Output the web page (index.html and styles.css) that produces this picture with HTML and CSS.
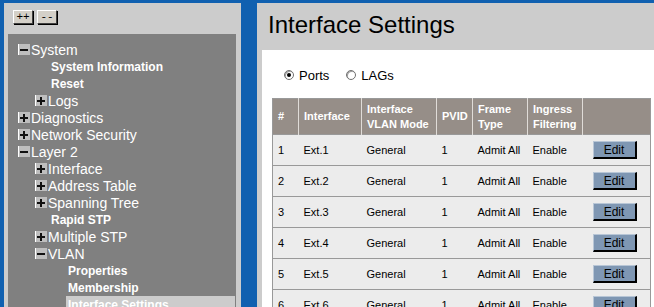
FILE: index.html
```html
<!DOCTYPE html>
<html lang="en">
<head>
    <meta charset="UTF-8">
    <title>Interface Settings</title>
    <link rel="stylesheet" href="styles.css">
</head>
<body>
    <div class="frame">
        <div class="side">
            <div class="side-tools">
                <button class="tool-btn">++</button>
                <button class="tool-btn">--</button>
            </div>
            <div class="tree">
                <div class="node l1"><span class="tog minus"></span>System</div>
                <div class="leaf l2">System Information</div>
                <div class="leaf l2">Reset</div>
                <div class="node l2"><span class="tog plus"></span>Logs</div>
                <div class="node l1"><span class="tog plus"></span>Diagnostics</div>
                <div class="node l1"><span class="tog plus"></span>Network Security</div>
                <div class="node l1"><span class="tog minus"></span>Layer 2</div>
                <div class="node l2"><span class="tog plus"></span>Interface</div>
                <div class="node l2"><span class="tog plus"></span>Address Table</div>
                <div class="node l2"><span class="tog plus"></span>Spanning Tree</div>
                <div class="leaf l2">Rapid STP</div>
                <div class="node l2"><span class="tog plus"></span>Multiple STP</div>
                <div class="node l2"><span class="tog minus"></span>VLAN</div>
                <div class="leaf l3">Properties</div>
                <div class="leaf l3">Membership</div>
                <div class="leaf l3 active">Interface Settings</div>
            </div>
        </div>
        <div class="main">
            <h1 class="page-title">Interface Settings</h1>
            <div class="content">
                <div class="radios">
                    <label class="radio-opt"><span class="radio on"></span>Ports</label>
                    <label class="radio-opt"><span class="radio"></span>LAGs</label>
                </div>
                <table class="grid">
                    <thead>
                        <tr>
                            <th class="c-num">#</th>
                            <th class="c-if">Interface</th>
                            <th class="c-mode">Interface<br>VLAN Mode</th>
                            <th class="c-pvid">PVID</th>
                            <th class="c-frame">Frame<br>Type</th>
                            <th class="c-ingress">Ingress<br>Filtering</th>
                            <th class="c-edit"></th>
                        </tr>
                    </thead>
                    <tbody>
                        <tr><td>1</td><td>Ext.1</td><td>General</td><td>1</td><td>Admit All</td><td>Enable</td><td class="c-edit"><button class="edit-btn">Edit</button></td></tr>
                        <tr><td>2</td><td>Ext.2</td><td>General</td><td>1</td><td>Admit All</td><td>Enable</td><td class="c-edit"><button class="edit-btn">Edit</button></td></tr>
                        <tr><td>3</td><td>Ext.3</td><td>General</td><td>1</td><td>Admit All</td><td>Enable</td><td class="c-edit"><button class="edit-btn">Edit</button></td></tr>
                        <tr><td>4</td><td>Ext.4</td><td>General</td><td>1</td><td>Admit All</td><td>Enable</td><td class="c-edit"><button class="edit-btn">Edit</button></td></tr>
                        <tr><td>5</td><td>Ext.5</td><td>General</td><td>1</td><td>Admit All</td><td>Enable</td><td class="c-edit"><button class="edit-btn">Edit</button></td></tr>
                        <tr><td>6</td><td>Ext.6</td><td>General</td><td>1</td><td>Admit All</td><td>Enable</td><td class="c-edit"><button class="edit-btn">Edit</button></td></tr>
                    </tbody>
                </table>
            </div>
        </div>
    </div>
</body>
</html>
```

FILE: styles.css
```css
html, body {
    margin: 0;
    padding: 0;
    height: 307px;
    overflow: hidden;
}
body {
    background-color: #1060b0;
    font-family: "Liberation Sans", Arial, sans-serif;
}
.frame {
    display: flex;
    gap: 16px;
    padding: 3px 0 0 4px;
    height: 304px;
}
.side {
    width: 237px;
    flex: none;
    background-color: #cccccc;
    display: flex;
    flex-direction: column;
}
.side-tools {
    flex: none;
    display: flex;
    gap: 4px;
    padding: 7px 0 0 9px;
    height: 24px;
}
.tool-btn {
    width: 20px;
    height: 14px;
    padding: 0;
    margin: 0;
    font-family: "Liberation Mono", monospace;
    font-size: 11px;
    line-height: 10px;
    color: #000;
    background-color: #d4d0c8;
    border: 1px solid;
    border-color: #ffffff #404040 #404040 #ffffff;
    box-shadow: 1px 1px 0 #000;
}
.tree {
    flex: 1;
    min-height: 0;
    overflow: hidden;
    margin: 0 5px 0 4px;
    background-color: #808080;
    padding-top: 7px;
    color: #fff;
}
.node, .leaf {
    height: 17px;
    display: flex;
    align-items: center;
    white-space: nowrap;
}
.node {
    font-size: 14px;
}
.leaf {
    font-size: 12px;
    font-weight: bold;
}
.node.l1 { padding-left: 10px; }
.node.l2 { padding-left: 27px; }
.leaf.l2 { padding-left: 43px; }
.leaf.l3 { padding-left: 60px; }
.leaf.active {
    margin-left: 58px;
    margin-right: 1px;
    padding-left: 2px;
    background-color: #cccccc;
}
.tog {
    position: relative;
    width: 11px;
    height: 11px;
    margin-right: 1px;
    background-color: #bebebe;
    border-left: 1px solid #fff;
    flex: none;
}
.tog::before, .tog.plus::after {
    content: "";
    position: absolute;
    background-color: #111;
}
.tog::before {
    left: 1px;
    top: 5px;
    width: 8px;
    height: 2px;
}
.tog.plus::after {
    left: 4px;
    top: 2px;
    width: 2px;
    height: 8px;
}
.main {
    flex: 1;
    min-width: 0;
    background-color: #cccccc;
    display: flex;
    flex-direction: column;
}
.page-title {
    flex: none;
    margin: 0;
    padding: 8px 0 0 11px;
    height: 39px;
    font-size: 24px;
    line-height: 28px;
    font-weight: normal;
    color: #000;
}
.content {
    flex: 1;
    min-height: 0;
    overflow: hidden;
    margin-left: 5px;
    background-color: #fff;
    padding: 0 3px 0 10px;
}
.radios {
    display: flex;
    gap: 17px;
    padding: 17px 0 0 12px;
    height: 31px;
    font-size: 13px;
}
.radio-opt {
    display: flex;
    align-items: center;
    height: 16px;
}
.radio {
    width: 8px;
    height: 8px;
    border-radius: 50%;
    border: 1px solid #707070;
    background-color: #fff;
    margin-right: 5px;
    position: relative;
    box-shadow: inset 1px 1px 0 #a0a0a0;
}
.radio.on::after {
    content: "";
    position: absolute;
    left: 2px;
    top: 2px;
    width: 4px;
    height: 4px;
    border-radius: 50%;
    background-color: #000;
}
.grid {
    width: 379px;
    border-collapse: collapse;
    border: 1px solid #999;
    font-size: 11px;
    table-layout: fixed;
}
.grid th {
    background-color: #968e88;
    color: #fff;
    font-weight: bold;
    text-align: left;
    height: 35px;
    padding: 0 0 0 5px;
    line-height: 15px;
    border-left: 1px solid #e0dcd8;
    vertical-align: middle;
}
.grid th:first-child {
    border-left: none;
}
.grid td {
    background-color: #ececec;
    color: #000;
    height: 30px;
    padding: 0 0 0 5px;
    border-top: 1px solid #999;
    white-space: nowrap;
}
.c-num { width: 20px; }
.c-if { width: 57px; }
.c-mode { width: 69px; }
.c-pvid { width: 30px; }
.c-frame { width: 49px; }
.c-ingress { width: 49px; }
.grid td.c-edit {
    padding-left: 10px;
}
.edit-btn {
    width: 44px;
    height: 18px;
    padding: 0;
    font-family: "Liberation Sans", Arial, sans-serif;
    font-size: 12px;
    color: #000;
    background-color: #7f97b3;
    border-style: solid;
    border-width: 1px 2px 2px 1px;
    border-color: #b8c6d6 #000 #000 #b8c6d6;
    display: block;
}
```
